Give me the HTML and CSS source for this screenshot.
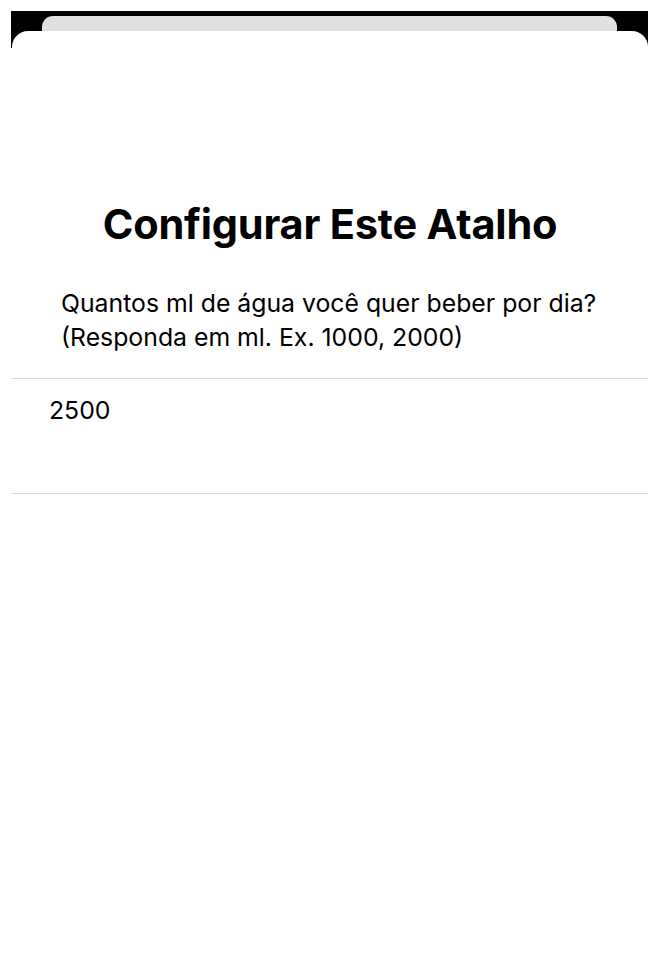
FILE: index.html
```html
<!DOCTYPE html>
<html lang="pt-BR">
<head>
    <meta charset="UTF-8">
    <meta name="viewport" content="width=device-width, initial-scale=1.0">
    <title>Configurar Este Atalho</title>
    <link rel="stylesheet" href="styles.css">
</head>
<body>

<!-- Stacked sheets behind -->
<div class="backdrop">
    <div class="back-card"></div>
</div>

<!-- Main sheet -->
<div class="sheet">
    <h1 class="sheet-title">Configurar Este Atalho</h1>
    <p class="question">Quantos ml de água você quer beber por dia?<br>(Responda em ml. Ex. 1000, 2000)</p>
    <div class="answer">
        <input type="text" class="answer-input" value="2500">
    </div>
</div>

</body>
</html>
```

FILE: styles.css
```css
body {
    margin: 0;
    background-color: #ffffff;
    font-family: Inter, "Noto Sans", "Liberation Sans", sans-serif;
    color: #000000;
}

/* Black frame with the card behind */
.backdrop {
    margin: 11px 12px 0 11px;
    height: 37px;
    padding: 5px 31px 0 31px;
    box-sizing: border-box;
    background-color: #000000;
}

.back-card {
    height: 100%;
    background-color: #e0e0e0;
    border-radius: 11px 11px 0 0;
}

/* Main white sheet */
.sheet {
    position: relative;
    margin: -17px 12px 0 12px;
    background-color: #ffffff;
    border-radius: 16px 16px 0 0;
    padding-top: 169px;
    min-height: 800px;
}

.sheet-title {
    margin: 0;
    text-align: center;
    font-size: 41.5px;
    font-weight: 700;
    line-height: 48px;
    letter-spacing: -0.2px;
}

.question {
    margin: 38px 0 0 0;
    padding: 0 20px 24px 49px;
    font-size: 24.8px;
    line-height: 34px;
    border-bottom: 1px solid #d8d8d8;
}

.answer {
    height: 115px;
    padding: 16px 20px 0 37px;
    box-sizing: border-box;
    border-bottom: 1px solid #d8d8d8;
}

.answer-input {
    display: block;
    width: 100%;
    padding: 0;
    border: none;
    outline: none;
    background: transparent;
    font-family: inherit;
    font-size: 24.8px;
    line-height: 30px;
    color: #000000;
}
```
